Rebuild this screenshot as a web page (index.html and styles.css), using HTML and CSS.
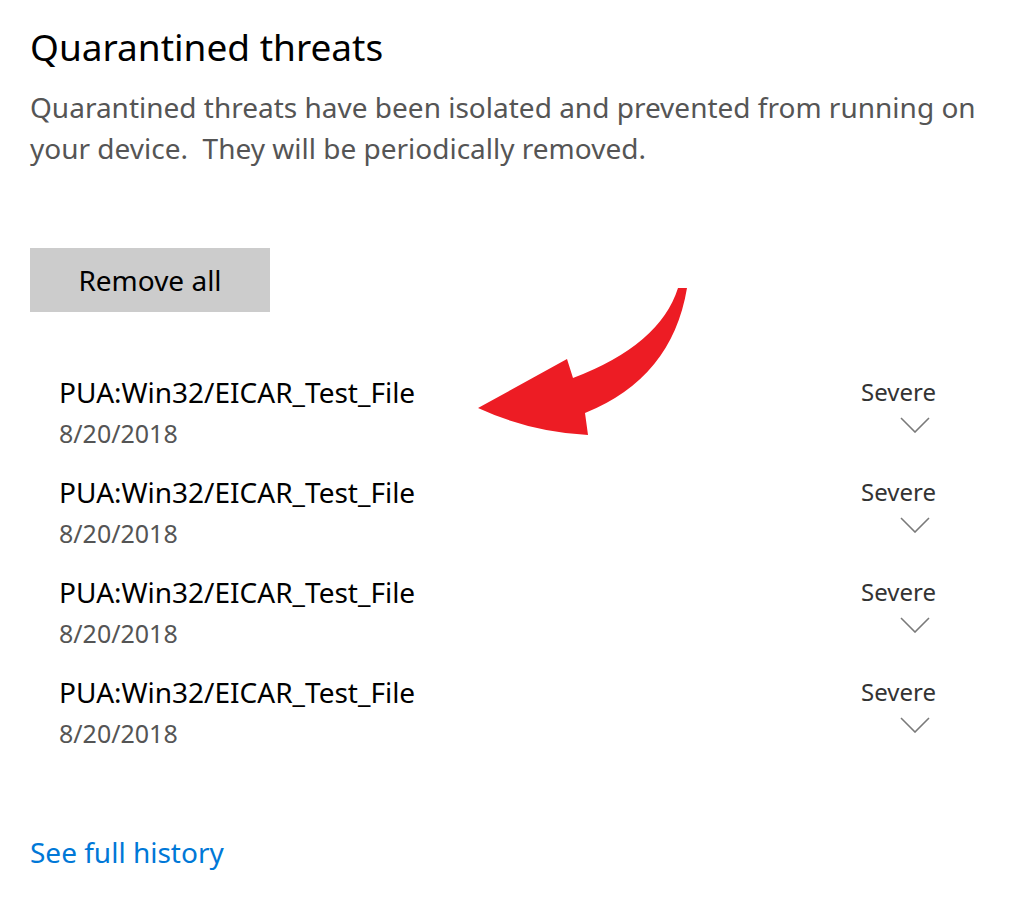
FILE: index.html
```html
<!DOCTYPE html>
<html lang="en">
<head>
<meta charset="utf-8">
<title>Quarantined threats</title>
<link rel="stylesheet" href="styles.css">
</head>
<body>
<main class="page">
  <h1 class="title">Quarantined threats</h1>
  <p class="desc">Quarantined threats have been isolated and prevented from running on your device.&nbsp; They will be periodically removed.</p>
  <button class="btn" type="button">Remove all</button>
  <ul class="list">
    <li class="row">
      <div class="info">
        <div class="name">PUA:Win32/EICAR_Test_File</div>
        <div class="date">8/20/2018</div>
      </div>
      <div class="sev">
        <span class="sev-label">Severe</span>
        <svg class="chev" width="30" height="16" viewBox="0 0 30 16"><path d="M1 1 L15 15 L29 1" fill="none" stroke="#7a7a7a" stroke-width="1.6"/></svg>
      </div>
    </li>
    <li class="row">
      <div class="info">
        <div class="name">PUA:Win32/EICAR_Test_File</div>
        <div class="date">8/20/2018</div>
      </div>
      <div class="sev">
        <span class="sev-label">Severe</span>
        <svg class="chev" width="30" height="16" viewBox="0 0 30 16"><path d="M1 1 L15 15 L29 1" fill="none" stroke="#7a7a7a" stroke-width="1.6"/></svg>
      </div>
    </li>
    <li class="row">
      <div class="info">
        <div class="name">PUA:Win32/EICAR_Test_File</div>
        <div class="date">8/20/2018</div>
      </div>
      <div class="sev">
        <span class="sev-label">Severe</span>
        <svg class="chev" width="30" height="16" viewBox="0 0 30 16"><path d="M1 1 L15 15 L29 1" fill="none" stroke="#7a7a7a" stroke-width="1.6"/></svg>
      </div>
    </li>
    <li class="row">
      <div class="info">
        <div class="name">PUA:Win32/EICAR_Test_File</div>
        <div class="date">8/20/2018</div>
      </div>
      <div class="sev">
        <span class="sev-label">Severe</span>
        <svg class="chev" width="30" height="16" viewBox="0 0 30 16"><path d="M1 1 L15 15 L29 1" fill="none" stroke="#7a7a7a" stroke-width="1.6"/></svg>
      </div>
    </li>
  </ul>
  <a class="link" href="#">See full history</a>
  <svg class="arrow" width="230" height="165" viewBox="0 0 230 165">
    <path d="M208 8 Q190 65 103 98 L97 79 L8 128 Q60 152 118 155 L115 133 Q202 98 217 8 Z" fill="#ed1c24"/>
  </svg>
</main>
</body>
</html>
```

FILE: styles.css
```css
html, body {
  margin: 0;
  padding: 0;
  background: #ffffff;
}

body {
  font-family: "Noto Sans", "Open Sans", "Liberation Sans", sans-serif;
  color: #000;
}

.page {
  position: relative;
  display: flex;
  flex-direction: column;
  align-items: flex-start;
  padding: 23px 30px 40px;
}

.title {
  margin: 0;
  font-size: 37px;
  line-height: 48px;
  font-weight: 400;
  color: #000;
}

.desc {
  margin: 16px 0 0;
  max-width: 960px;
  font-size: 28px;
  line-height: 41px;
  color: #555555;
}

.btn {
  margin-top: 79px;
  width: 240px;
  height: 64px;
  padding: 0;
  border: none;
  background: #cccccc;
  font-family: inherit;
  font-size: 28px;
  line-height: 64px;
  color: #000;
}

.list {
  list-style: none;
  margin: 60px 0 0;
  padding: 0 66px 0 29px;
  align-self: stretch;
  display: flex;
  flex-direction: column;
  gap: 18px;
}

.row {
  display: flex;
  justify-content: space-between;
  align-items: flex-start;
}

.name {
  font-size: 28px;
  line-height: 40px;
  color: #000;
}

.date {
  font-size: 25px;
  line-height: 42px;
  color: #555555;
}

.sev {
  display: flex;
  flex-direction: column;
  align-items: flex-end;
}

.sev-label {
  font-size: 24px;
  line-height: 40px;
  color: #333333;
}

.chev {
  display: block;
  margin-top: 5px;
  margin-right: 6px;
}

.link {
  margin-top: 78px;
  font-size: 28px;
  line-height: 40px;
  color: #0078d7;
  text-decoration: none;
}

.arrow {
  position: absolute;
  left: 470px;
  top: 280px;
}
```
